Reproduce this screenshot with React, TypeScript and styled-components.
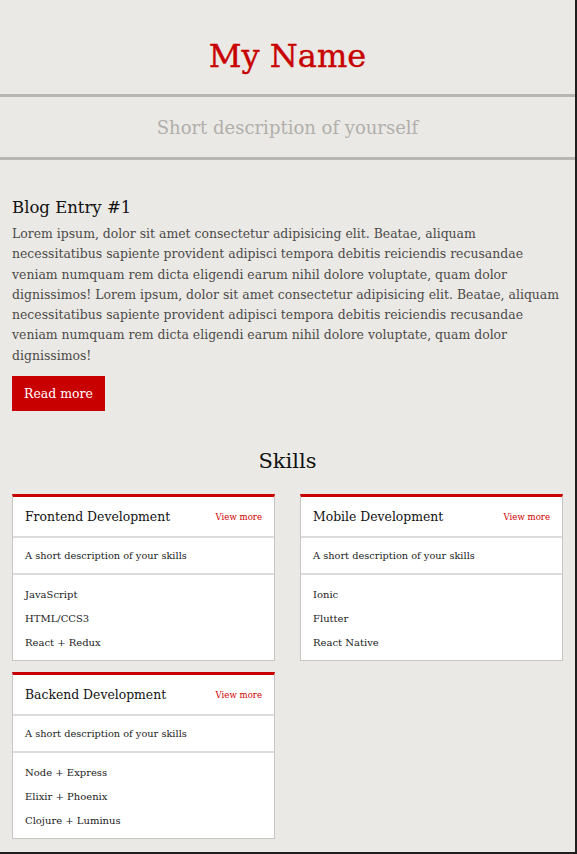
import React from "react";
import styled, { createGlobalStyle } from "styled-components";

const Global = createGlobalStyle`
  html, body { margin: 0; padding: 0; background: #1f1f1f; }
  body { font-family: "DejaVu Serif", "Liberation Serif", serif; }
  * { box-sizing: border-box; }
`;

const Page = styled.div`
  width: 575px;
  height: 852px;
  overflow: hidden;
  background: #ebe9e5;
`;

const Header = styled.header`
  height: 97px;
  padding-top: 34px;
  border-bottom: 3px solid #b8b6b2;
  text-align: center;
`;

const Name = styled.h1`
  margin: 0;
  font-size: 32px;
  line-height: 44px;
  font-weight: 400;
  color: #c80000;
  -webkit-text-stroke: 0.4px #c80000;
`;

const Tagline = styled.div`
  height: 63px;
  border-bottom: 3px solid #b8b6b2;
  display: flex;
  align-items: center;
  justify-content: center;
  font-size: 18px;
  color: #b1afab;
`;

const Main = styled.main`
  padding: 36px 12px 0;
`;

const PostTitle = styled.h2`
  margin: 0 0 4px;
  font-size: 16.5px;
  line-height: 24px;
  font-weight: 400;
  color: #111;
`;

const PostBody = styled.p`
  margin: 0;
  font-size: 12.45px;
  line-height: 20.3px;
  color: #4b4a48;
`;

const Button = styled.button`
  margin-top: 10px;
  height: 35px;
  padding: 0 12px;
  border: none;
  background: #c80000;
  color: #fff;
  font-family: inherit;
  font-size: 12.5px;
`;

const SkillsTitle = styled.h2`
  margin: 36px 0 19px;
  text-align: center;
  font-size: 21px;
  line-height: 28px;
  font-weight: 400;
  color: #111;
`;

const Grid = styled.div`
  display: grid;
  grid-template-columns: 263px 263px;
  column-gap: 25px;
  row-gap: 11px;
  align-items: start;
`;

const Card = styled.section`
  background: #fff;
  border: 1px solid #c7c6c4;
  border-top: 3px solid #c80000;
`;

const CardHead = styled.div`
  height: 41px;
  padding: 0 12px;
  display: flex;
  align-items: center;
  justify-content: space-between;
  border-bottom: 2px solid #dddcda;
`;

const CardTitle = styled.h3`
  margin: 0;
  font-size: 12.4px;
  font-weight: 400;
  color: #111;
`;

const ViewMore = styled.a`
  font-size: 8.6px;
  color: #d00000;
  text-decoration: none;
`;

const CardDesc = styled.div`
  height: 37px;
  padding: 0 12px;
  display: flex;
  align-items: center;
  border-bottom: 2px solid #dddcda;
  font-size: 9.8px;
  color: #222;
`;

const List = styled.ul`
  list-style: none;
  margin: 0;
  padding: 8px 12px 5px;
`;

const Item = styled.li`
  font-size: 10px;
  line-height: 24px;
  color: #222;
`;

const skills = [
  { title: "Frontend Development", items: ["JavaScript", "HTML/CCS3", "React + Redux"] },
  { title: "Mobile Development", items: ["Ionic", "Flutter", "React Native"] },
  { title: "Backend Development", items: ["Node + Express", "Elixir + Phoenix", "Clojure + Luminus"] },
];

const lorem =
  "Lorem ipsum, dolor sit amet consectetur adipisicing elit. Beatae, aliquam necessitatibus sapiente provident adipisci tempora debitis reiciendis recusandae veniam numquam rem dicta eligendi earum nihil dolore voluptate, quam dolor dignissimos!";

export default function App() {
  return (
    <Page>
      <Global />
      <Header>
        <Name>My Name</Name>
      </Header>
      <Tagline>Short description of yourself</Tagline>
      <Main>
        <PostTitle>Blog Entry #1</PostTitle>
        <PostBody>
          {lorem} {lorem}
        </PostBody>
        <Button>Read more</Button>
        <SkillsTitle>Skills</SkillsTitle>
        <Grid>
          {skills.map((s) => (
            <Card key={s.title}>
              <CardHead>
                <CardTitle>{s.title}</CardTitle>
                <ViewMore href="#">View more</ViewMore>
              </CardHead>
              <CardDesc>A short description of your skills</CardDesc>
              <List>
                {s.items.map((i) => (
                  <Item key={i}>{i}</Item>
                ))}
              </List>
            </Card>
          ))}
        </Grid>
      </Main>
    </Page>
  );
}
